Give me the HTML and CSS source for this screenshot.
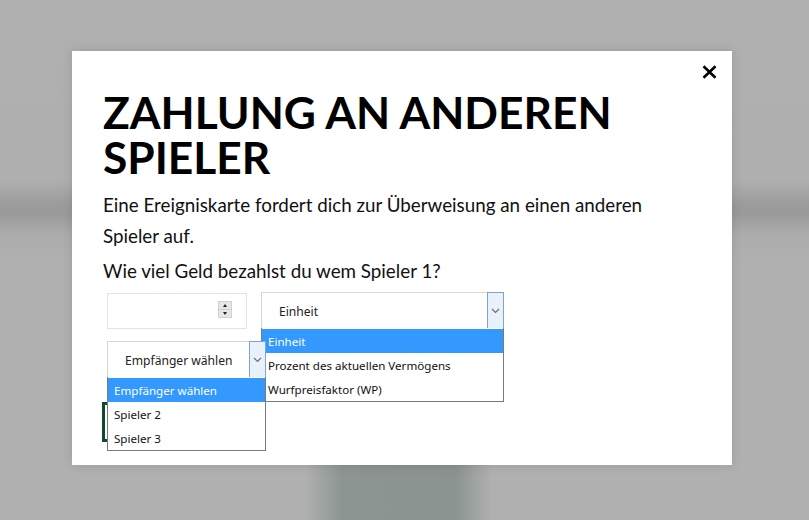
FILE: index.html
```html
<!DOCTYPE html>
<html lang="de">
<head>
<meta charset="utf-8">
<title>Zahlung an anderen Spieler</title>
<link rel="stylesheet" href="styles.css">
</head>
<body>
<div class="modal">
  <button class="close" aria-label="Schließen">
    <svg width="15" height="14" viewBox="0 0 15 14"><path d="M1.5 1.2 L13.5 12.8 M13.5 1.2 L1.5 12.8" stroke="#000" stroke-width="2.6" fill="none"/></svg>
  </button>
  <h1 class="title">ZAHLUNG AN ANDEREN SPIELER</h1>
  <p class="text">Eine Ereigniskarte fordert dich zur Überweisung an einen anderen Spieler auf.</p>
  <p class="text question">Wie viel Geld bezahlst du wem Spieler 1?</p>
  <div class="form">
    <div class="row row-one">
      <div class="num-input">
        <span class="spinner"><span class="spin up"></span><span class="spin down"></span></span>
      </div>
      <div class="select select-unit">
        <span class="select-value">Einheit</span>
        <span class="select-btn"><svg width="9" height="6" viewBox="0 0 9 6"><path d="M1 1 L4.5 4.5 L8 1" stroke="#6d6d6d" stroke-width="1.2" fill="none"/></svg></span>
        <ul class="options options-unit">
          <li class="active">Einheit</li>
          <li>Prozent des aktuellen Vermögens</li>
          <li>Wurfpreisfaktor (WP)</li>
        </ul>
      </div>
    </div>
    <div class="row row-two">
      <div class="select select-recipient">
        <span class="select-value">Empfänger wählen</span>
        <span class="select-btn"><svg width="9" height="6" viewBox="0 0 9 6"><path d="M1 1 L4.5 4.5 L8 1" stroke="#6d6d6d" stroke-width="1.2" fill="none"/></svg></span>
        <ul class="options options-recipient">
          <li class="active">Empfänger wählen</li>
          <li>Spieler 2</li>
          <li>Spieler 3</li>
        </ul>
      </div>
    </div>
    <div class="row row-three">
      <button class="pay" aria-label="Bezahlen"></button>
    </div>
  </div>
</div>
</body>
</html>
```
FILE: styles.css
```css
html, body {
  margin: 0;
  padding: 0;
}
body {
  width: 809px;
  height: 520px;
  overflow: hidden;
  background-color: #b0b0b0;
  background-image:
    linear-gradient(to right, rgba(138,148,144,0) 0, rgba(138,148,144,0) 305px, #8c9591 342px, #8a938f 455px, rgba(138,148,144,0) 492px),
    linear-gradient(to bottom, #b0b0b0 0, #afafaf 180px, #9b9b9b 205px, #9a9a9a 214px, #adadad 236px, #b0b0b0 260px, #b0b0b0 100%);
  background-size: 100% 60px, 100% 100%;
  background-position: 0 462px, 0 0;
  background-repeat: no-repeat;
  font-family: Lato, "Open Sans", sans-serif;
}
.modal {
  position: relative;
  box-sizing: border-box;
  width: 660px;
  height: 414px;
  margin: 51px 0 0 72px;
  padding: 38px 31px 0 31px;
  background: #fff;
  box-shadow: 0 0 10px rgba(0,0,0,0.12);
}
.close {
  position: absolute;
  top: 14px;
  right: 15px;
  width: 15px;
  height: 14px;
  padding: 0;
  border: 0;
  background: none;
  line-height: 0;
}
.title {
  margin: 0;
  font-family: Lato, sans-serif;
  font-weight: 700;
  font-size: 44.3px;
  line-height: 45px;
  color: #000;
}
.text {
  margin: 10px 0 0 0;
  font-size: 18.8px;
  line-height: 31px;
  color: #111;
}
.question {
  margin-top: 4px;
}
.form {
  margin-top: 6px;
}
.row {
  display: flex;
  align-items: flex-start;
  padding-left: 4px;
}
.row-one {
  gap: 14px;
  position: relative;
  z-index: 1;
}
.row-two {
  margin-top: 12px;
  position: relative;
  z-index: 2;
}
.row-three {
  margin-top: 24px;
  padding-left: 0;
  margin-left: -1px;
}
.num-input {
  box-sizing: border-box;
  width: 140px;
  height: 36px;
  margin-top: 1px;
  border: 1px solid #e2e2e2;
  background: #fff;
  display: flex;
  justify-content: flex-end;
  padding: 7px 14px 0 0;
}
.spinner {
  display: flex;
  flex-direction: column;
  width: 14px;
  height: 17px;
}
.spin {
  flex: 1;
  box-sizing: border-box;
  border: 1px solid #d0d0d0;
  background: #e6e6e6;
  position: relative;
}
.spin + .spin {
  border-top: 0;
}
.spin::after {
  content: "";
  position: absolute;
  left: 4px;
  width: 0;
  height: 0;
  border-left: 2.5px solid transparent;
  border-right: 2.5px solid transparent;
}
.up::after {
  top: 2px;
  border-bottom: 3px solid #222;
}
.down::after {
  top: 2px;
  border-top: 3px solid #222;
}
.select {
  position: relative;
  box-sizing: border-box;
  height: 37px;
  border: 1px solid #d6d6d6;
  background: #fff;
  display: flex;
  align-items: center;
  font-family: "Noto Sans", "DejaVu Sans", sans-serif;
  font-size: 12.1px;
  color: #222;
}
.select-unit {
  width: 243px;
}
.select-recipient {
  width: 159px;
}
.select-value {
  flex: 1;
  padding-left: 17px;
  padding-top: 1px;
}
.select-btn {
  box-sizing: border-box;
  align-self: stretch;
  width: 17px;
  margin: -1px -1px -1px 0;
  border: 1px solid #7aa6d3;
  background: #e9f2fb;
  display: flex;
  align-items: center;
  justify-content: center;
}
.options {
  position: absolute;
  top: 100%;
  left: -1px;
  right: -1px;
  margin: 0;
  padding: 1px 0 0 0;
  list-style: none;
  background: #fff;
  border: 1px solid #7a7a7a;
  border-top: 0;
  font-family: "Noto Sans", "DejaVu Sans", sans-serif;
  font-size: 11.6px;
  color: #111;
}
.options li {
  height: 24px;
  line-height: 26px;
  padding-left: 6px;
  white-space: nowrap;
  overflow: hidden;
}
.options li.active {
  background: #3399ff;
  color: #fff;
}
.pay {
  box-sizing: border-box;
  width: 150px;
  height: 40px;
  border: 3px solid #0f4a2b;
  background: #fff;
}
```
